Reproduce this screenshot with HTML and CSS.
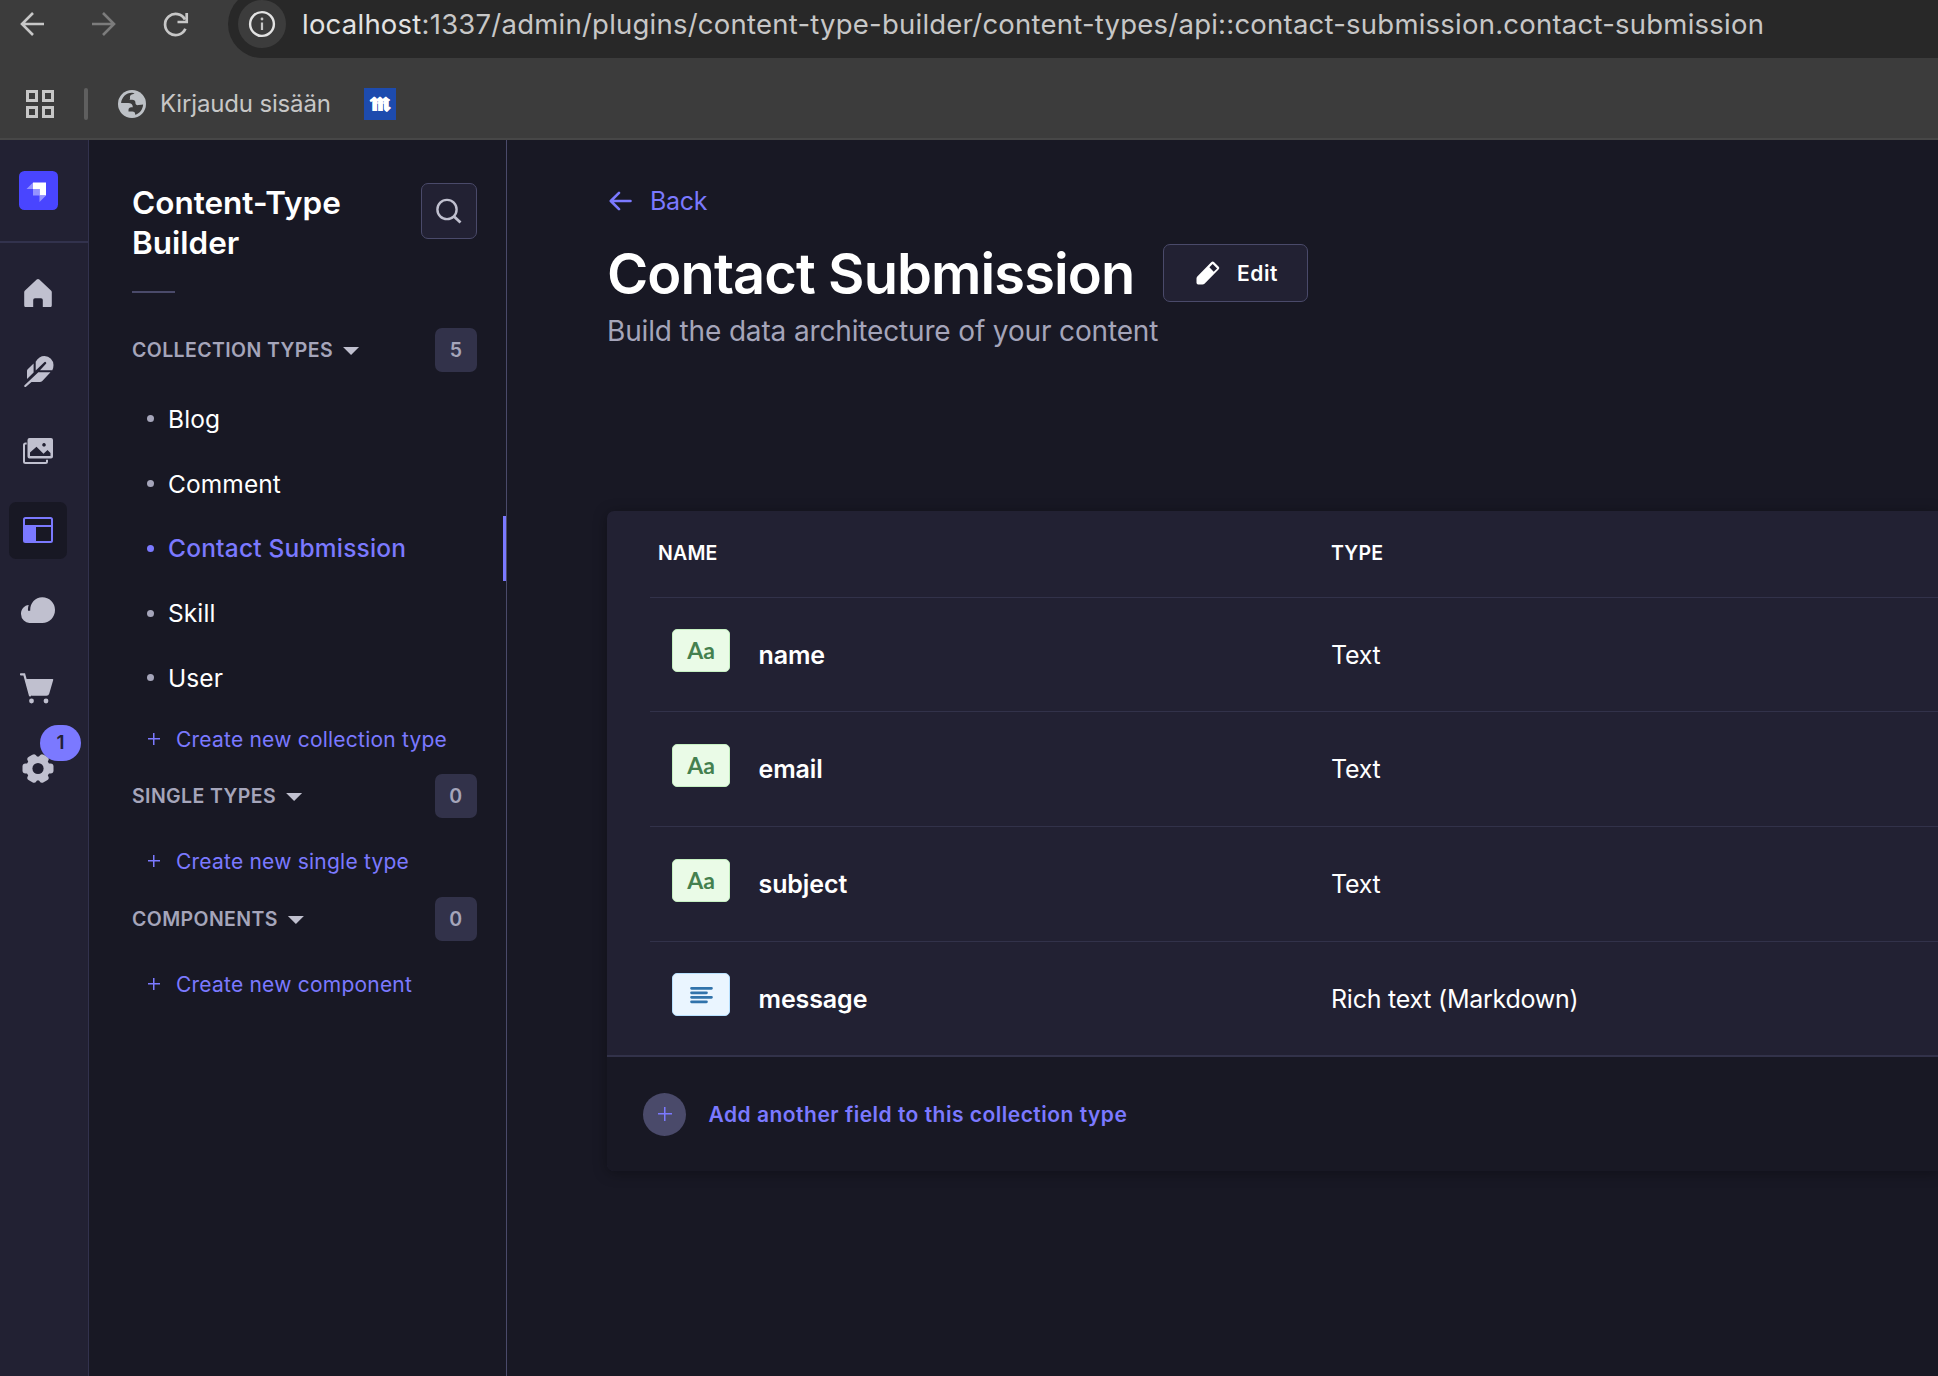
FILE: index.html
```html
<!DOCTYPE html>
<html lang="en">
<head>
<meta charset="utf-8">
<title>Content-Type Builder</title>
<link rel="stylesheet" href="styles.css">
</head>
<body>
<header class="browser">
  <div class="toolbar">
    <svg class="nav-back" width="24" height="24" viewBox="0 0 24 24" fill="none" stroke="#c7c7c7" stroke-width="2.6"><path d="M24 12H2M13 1 2 12l11 11"/></svg>
    <svg class="nav-forward" width="24" height="24" viewBox="0 0 24 24" fill="none" stroke="#7c7c7c" stroke-width="2.6"><path d="M0 12h22M11 1l11 11-11 11"/></svg>
    <svg class="nav-reload" width="26" height="26" viewBox="0 0 26 26" fill="none" stroke="#c7c7c7" stroke-width="2.7"><path d="M22.4 16.8A10.6 10.6 0 1 1 22 7.5"/><path d="M23.7 1v9H14.500"/></svg>
    <div class="address">
      <span class="site-info"><svg width="28" height="28" viewBox="0 0 28 28"><circle cx="14" cy="14" r="11.900" fill="none" stroke="#e3e3e3" stroke-width="2.400"/><path d="M14 12.500v7.500" stroke="#c7c7c7" stroke-width="2.200"/><circle cx="14" cy="9" r="1.400" fill="#c7c7c7"/></svg></span>
      <span class="url"><span class="host">localhost</span>:1337/admin/plugins/content-type-builder/content-types/api::contact-submission.contact-submission</span>
    </div>
  </div>
  <div class="bookmarks">
    <svg class="apps" width="28" height="28" viewBox="0 0 28 28" fill="none" stroke="#c7c7c7" stroke-width="3"><path d="M1.500 1.500h9v9h-9zM17.500 1.500h9v9h-9zM1.500 17.500h9v9h-9zM17.500 17.500h9v9h-9z"/></svg>
    <span class="bar"></span>
    <svg class="globe" width="28" height="28" viewBox="0 0 28 28"><circle cx="14" cy="14" r="14" fill="#bdc1c6"/><path d="M16.500 3.200C15 4.500 12.500 4 12 6.500c-.3 1.600.6 2.400-.5 3.200h2.700c2 0 3.200 1 3.200 2.800 0 2.400 1.200 3 3.600 2.600l4.100-.7c-.2 4.600-3.200 9-8 10.400v-1c0-1.500-1.300-2.300-2.700-2.300H10.500v-1.800c0-1.500 1.200-2.500 2.700-2.500h1.600c0-2.600-1.700-4.100-4.600-4.100H3.100C3.500 7.500 8 2.700 14 2.700z" fill="#3c3c3c"/></svg>
    <span class="bookmark-label">Kirjaudu sisään</span>
    <svg class="favicon" width="32" height="32" viewBox="0 0 32 32"><rect width="32" height="32" fill="#1d4bae"/><text x="16" y="0" transform="translate(0 23)" text-anchor="middle">𝖒</text><path d="M10 15h11" stroke="#fff" stroke-width="1.500"/></svg>
  </div>
</header>
<div class="app">
  <nav class="rail">
    <div class="brand">
      <svg width="39" height="39" viewBox="0 0 39 39"><rect width="39" height="39" rx="5.500" fill="#4945ff"/><path d="M14 11.500h13v13h-6.500v-6.500H14z" fill="#fff"/><path d="M14 18h6.500v6.500H14zM14 11.500V18H7.500zM20.500 24.500H27L20.500 31z" fill="#9593ff"/></svg>
    </div>
    <ul class="rail-list">
      <li><svg width="28" height="28" viewBox="0 0 28 28" fill="#c0c0cf"><path d="M12.700.6a2 2 0 0 1 2.600 0L27 11.600a2 2 0 0 1 .8 1.600v13a2 2 0 0 1-2 2h-7V21a1.800 1.800 0 0 0-1.800-1.800h-6A1.800 1.800 0 0 0 9.200 21v7.200h-7a2 2 0 0 1-2-2v-13a2 2 0 0 1 .8-1.600z"/></svg></li>
      <li><svg class="feather" width="30" height="31" viewBox="0 0 30 31"><path fill="#c0c0cf" d="M11.700 5.800Q15 0 20.500 0A9 9 0 0 1 29.500 9q0 3-1.200 5.300H16l6-6.500q.6-.9-.1-1.600t-1.600 0l-8.600 8.300zM9.600 7.500v9L3 23v-8q0-1 .7-1.700zM14.300 16.300h12.200L18.300 25q-1 1-2.500 1H7.500L2 30.700q-.9.700-1.500 0t0-1.500z"/></svg></li>
      <li><svg width="30" height="26" viewBox="0 0 30 26"><rect x="1" y="5.500" width="23" height="19.500" rx="1.500" fill="none" stroke="#c0c0cf" stroke-width="2"/><rect x="3.700" y="0" width="26" height="21.800" rx="2" fill="#222133"/><path fill-rule="evenodd" fill="#c0c0cf" d="M6.500 0h21.500a2 2 0 0 1 2 2v16.500a2 2 0 0 1-2 2H6.500a2 2 0 0 1-2-2V2a2 2 0 0 1 2-2M7 14.500V18h20.500v-3l-3-3-4 3.800-7-7zM21 5a1.800 1.800 0 1 0 .01 0"/></svg></li>
      <li><span class="rail-active"><svg width="30" height="26" viewBox="0 0 30 26"><rect x="1" y="1" width="28" height="24" rx="1.500" fill="none" stroke="#7b79ff" stroke-width="2"/><path d="M1 9h28M12 10v15" stroke="#7b79ff" stroke-width="2"/><path d="M1.500 9H13v16H1.500z" fill="#7b79ff"/></svg></span></li>
      <li><svg width="34" height="26" viewBox="0 0 34 26"><path fill="#c0c0cf" d="M9.500 26A9 9 0 0 1 0 17C0 12 3.500 8.400 7.700 8.100A13 13 0 0 0 7 13.700h2.200C9 6 14 .2 21.300.2A12.700 12.700 0 0 1 34 13c0 7.200-5.500 13-12.700 13z"/></svg></li>
      <li><svg class="cart" width="34" height="31" viewBox="0 0 34 31"><path d="M.9 1.300h3.300L10 22.500" fill="none" stroke="#c0c0cf" stroke-width="2.200" stroke-linecap="round"/><path fill="#c0c0cf" d="M5 6h27.500q1 0 .7 1l-4 13.800q-.6 2-2.700 2H12q-2.300 0-2.800-2z"/><circle cx="11.500" cy="28" r="2.400" fill="#c0c0cf"/><circle cx="26" cy="28" r="2.400" fill="#c0c0cf"/></svg></li>
      <li class="settings"><svg width="32" height="31" viewBox="0 0 32 31"><g fill="#c0c0cf"><circle cx="16" cy="15.500" r="12"/><rect x="11" y="19" width="10" height="11.300" rx="3" transform="rotate(30 16 15.500)"/><rect x="11" y="19" width="10" height="12" rx="3" transform="rotate(90 16 15.500)"/><rect x="11" y="19" width="10" height="11.300" rx="3" transform="rotate(150 16 15.500)"/><rect x="11" y="19" width="10" height="11.300" rx="3" transform="rotate(210 16 15.500)"/><rect x="11" y="19" width="10" height="12" rx="3" transform="rotate(270 16 15.500)"/><rect x="11" y="19" width="10" height="11.300" rx="3" transform="rotate(330 16 15.500)"/></g><circle cx="16" cy="15.500" r="5.600" fill="#222133"/></svg><span class="notice">1</span></li>
    </ul>
  </nav>
  <aside class="subnav">
    <div class="subnav-head">
      <h2>Content-Type<br>Builder</h2>
      <button class="search"><svg width="26" height="26" viewBox="0 0 26 26" fill="none" stroke="#c0c0cf" stroke-width="2.400"><circle cx="11" cy="11.500" r="9.600"/><path d="m17.500 18 7 6.500" stroke-width="2.800"/></svg></button>
    </div>
    <hr class="short-rule">
    <section>
      <div class="group"><span>COLLECTION TYPES</span><i class="caret"></i><b class="count">5</b></div>
      <ul class="links">
        <li>Blog</li>
        <li>Comment</li>
        <li class="current">Contact Submission</li>
        <li>Skill</li>
        <li>User</li>
      </ul>
      <div class="create after-links"><i class="plus"></i><span>Create new collection type</span></div>
    </section>
    <section>
      <div class="group"><span>SINGLE TYPES</span><i class="caret"></i><b class="count">0</b></div>
      <div class="create"><i class="plus"></i><span>Create new single type</span></div>
    </section>
    <section>
      <div class="group"><span>COMPONENTS</span><i class="caret"></i><b class="count">0</b></div>
      <div class="create"><i class="plus"></i><span>Create new component</span></div>
    </section>
  </aside>
  <main class="content">
    <a class="back"><svg width="23" height="20" viewBox="0 0 23 20" fill="none" stroke="#7b79ff" stroke-width="2.600" stroke-linecap="round" stroke-linejoin="round"><path d="M21.500 10H2M10 1.800 1.800 10l8.200 8.200"/></svg><span>Back</span></a>
    <div class="title-row">
      <h1>Contact Submission</h1>
      <button class="edit"><svg width="24" height="24" viewBox="0 0 24 24"><path fill="#fff" fill-rule="evenodd" d="M15.200 1.200q1.500-1.500 3 0l4.300 4.300q1.500 1.500 0 3L8.500 22.700q-.8.800-2 .8H2.200Q.5 23.500.5 21.800v-4.300q0-1.200.8-2zM16.700 2.900l-3.300 3.300 4.300 4.600 3.400-3.400z"/></svg><span>Edit</span></button>
    </div>
    <p class="subtitle">Build the data architecture of your content</p>
    <div class="card">
      <div class="thead"><span>NAME</span><span>TYPE</span></div>
      <div class="row short"><span class="field"><span class="tag text">Aa</span><strong>name</strong></span><span>Text</span></div>
      <div class="row"><span class="field"><span class="tag text">Aa</span><strong>email</strong></span><span>Text</span></div>
      <div class="row"><span class="field"><span class="tag text">Aa</span><strong>subject</strong></span><span>Text</span></div>
      <div class="row short"><span class="field"><span class="tag rich"><svg width="23" height="18" viewBox="0 0 23 18" stroke="#3173ab" stroke-width="2.700" stroke-linecap="round"><path d="M1.500 2.300h20M1.500 6.800h15M1.500 11.300h20M1.500 15.800h15"/></svg></span><strong>message</strong></span><span>Rich text (Markdown)</span></div>
      <div class="add"><span class="add-dot"><i class="plus"></i></span><span>Add another field to this collection type</span></div>
    </div>
  </main>
</div>
</body>
</html>
```
FILE: styles.css
```css
* { box-sizing: border-box; }
body {
  margin: 0;
  width: 1938px;
  height: 1376px;
  overflow: hidden;
  background: #181824;
  color: #fff;
  font-family: Inter, "Liberation Sans", sans-serif;
}
ul { list-style: none; margin: 0; padding: 0; }
h1, h2, p { margin: 0; }
svg { display: block; flex: none; }
button { font: inherit; color: inherit; padding: 0; }

.browser { height: 140px; background: #3c3c3c; border-bottom: 2px solid #474747; }
.toolbar { display: flex; height: 58px; padding-left: 20px; }
.toolbar > svg { margin-top: 12px; }
.nav-forward { margin-left: 48px; }
.nav-reload { margin-left: 47px; }
.address {
  display: flex;
  flex: 1;
  align-items: center;
  height: 68px;
  margin: -10px 0 0 39px;
  padding-left: 10px;
  background: #282828;
  border-radius: 34px 0 0 34px;
}
.site-info { display: flex; align-items: center; justify-content: center; width: 48px; height: 48px; border-radius: 50%; background: #3c3c3c; }
.url { margin-left: 16px; font-size: 27.500px; letter-spacing: .23px; color: #c7c7c7; white-space: nowrap; }
.host { color: #e3e3e3; }
.bookmarks { display: flex; align-items: center; height: 92px; padding: 0 0 0 26px; }
.bar { width: 4px; height: 32px; margin: 0 30px; border-radius: 2px; background: #5f5f5f; }
.bookmark-label { width: 204px; margin: -1px 0 0 14px; font-size: 24px; letter-spacing: -.16px; color: #c7c7c7; white-space: nowrap; }
.favicon { overflow: visible; }
.favicon text { font: bold 26px "DejaVu Sans", "Liberation Serif", serif; fill: #fff; stroke: #fff; stroke-width: .7px; }

.app { display: flex; height: 1236px; }
.rail { width: 89px; background: #222133; border-right: 1px solid #32324d; }
.brand { height: 103px; padding: 31px 0 0 19px; border-bottom: 2px solid #32324d; }
.rail-list { width: 76px; padding-top: 10.300px; }
.rail-list li { display: flex; align-items: center; justify-content: center; height: 79.200px; }
.feather { margin: -1px 0 0 2px; }
.cart { margin-right: 2px; }
.rail-active { display: flex; align-items: center; justify-content: center; width: 58px; height: 57px; border-radius: 7px; background: #181824; }
.settings { position: relative; }
.notice { position: absolute; left: 40px; top: -3px; width: 41px; height: 36px; border-radius: 18px; background: #7b79ff; color: #222133; font-size: 19px; font-weight: 600; line-height: 36px; text-align: center; }

.subnav { width: 418px; border-right: 1px solid #4a4a6a; }
.subnav-head { display: flex; justify-content: space-between; padding: 43px 29px 0 43px; }
h2 { font-size: 31.500px; line-height: 40px; font-weight: 600; white-space: nowrap; }
.search { display: flex; align-items: center; justify-content: center; width: 56px; height: 56px; border: 1px solid #4a4a6a; border-radius: 7px; background: #222133; }
.short-rule { width: 43px; height: 2px; margin: 28px 0 35px 43px; border: 0; background: #4a4a6a; }
.group { display: flex; align-items: center; height: 44px; padding: 0 29px 0 43px; color: #a5a5ba; font-size: 19.500px; font-weight: 600; letter-spacing: .4px; white-space: nowrap; }
.caret { width: 16px; height: 8px; margin: 2px 0 0 10px; background: #c0c0cf; clip-path: polygon(0 0, 100% 0, 50% 100%); }
.count { display: flex; align-items: center; justify-content: center; width: 42px; height: 44px; margin-left: auto; border-radius: 7px; background: #32324a; font-weight: 600; }
.links { padding-top: 14.400px; }
.links li { display: flex; align-items: center; height: 64.800px; padding-left: 58px; font-size: 24.500px; letter-spacing: .1px; white-space: nowrap; }
.links li::before { content: ""; width: 7px; height: 7px; margin-right: 14px; border-radius: 50%; background: #a5a5ba; }
.links .current { color: #7b79ff; border-right: 3px solid #7b79ff; font-weight: 500; letter-spacing: .2px; }
.links .current::before { background: #7b79ff; }
.create { display: flex; align-items: center; height: 79px; padding: 7px 0 0 59px; color: #7b79ff; font-size: 21px; letter-spacing: .22px; white-space: nowrap; }
.create.after-links { height: 63.700px; padding: 0 0 6px 59px; }
.plus { flex: none; width: 12px; height: 12px; background: linear-gradient(#7b79ff, #7b79ff) center / 100% 1.500px no-repeat, linear-gradient(#7b79ff, #7b79ff) center / 1.500px 100% no-repeat; }
.create .plus { margin-right: 16px; }

.content { flex: 1; min-width: 0; padding: 43px 0 0 100px; }
.back { display: flex; align-items: center; gap: 18px; height: 36px; padding-left: 2px; color: #7b79ff; font-size: 25px; letter-spacing: -.3px; }
.title-row { display: flex; align-items: center; height: 58px; margin-top: 25px; }
h1 { width: 556px; padding-top: 2px; font-size: 56px; line-height: 58px; font-weight: 600; letter-spacing: -.9px; white-space: nowrap; }
.edit { display: flex; align-items: center; gap: 17px; width: 145px; height: 58px; padding-left: 32px; border: 1px solid #4a4a6a; border-radius: 7px; background: #222133; font-size: 21px; font-weight: 600; letter-spacing: .6px; }
.subtitle { height: 58px; line-height: 58px; color: #a5a5ba; font-size: 28px; letter-spacing: -.15px; white-space: nowrap; }
.card { margin-top: 151px; border-radius: 7px 0 0 7px; box-shadow: 0 2px 14px rgba(3, 3, 5, .35); background: #222133; }
.thead, .row { display: grid; grid-template-columns: 681px 1fr; align-items: center; margin-left: 43px; }
.thead { height: 86px; padding: 0 0 2px 8px; grid-template-columns: 673px 1fr; font-size: 19.500px; font-weight: 600; letter-spacing: .2px; }
.row { height: 115px; border-top: 1px solid #32324a; font-size: 25px; letter-spacing: -.25px; white-space: nowrap; }
.row.short { height: 114px; }
.field { display: flex; align-items: center; padding-left: 22px; }
.field strong { font-weight: 600; letter-spacing: -.1px; }
.tag { display: flex; align-items: center; justify-content: center; width: 58px; height: 43px; margin: 0 28.500px 8px 0; border-radius: 5px; border: 1px solid; }
.tag.text { background: #eafbe7; border-color: #c6f0c2; color: #44804f; font: bold 23px/1 Lato, sans-serif; letter-spacing: 0; }
.tag.rich { background: #eaf5ff; border-color: #b8e1ff; }
.add { display: flex; align-items: center; height: 116px; padding: 0 0 0 36px; border-top: 2px solid #32324a; border-radius: 0 0 0 7px; background: #181824; color: #7b79ff; font-size: 21px; font-weight: 600; letter-spacing: .49px; white-space: nowrap; }
.add-dot { display: flex; align-items: center; justify-content: center; width: 43px; height: 43px; margin-right: 22.500px; border-radius: 50%; background: #4a4a6a; }
.add-dot .plus { width: 14px; height: 14px; }
```
